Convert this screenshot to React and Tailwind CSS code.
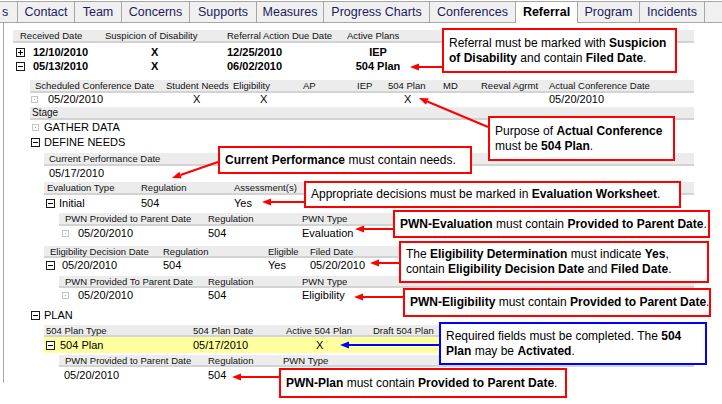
import React from 'react';

const TABS = [
  { label: 's', w: 'w-[18px]' },
  { label: 'Contact', w: 'w-[57px]' },
  { label: 'Team', w: 'w-[47px]' },
  { label: 'Concerns', w: 'w-[68px]' },
  { label: 'Supports', w: 'w-[67px]' },
  { label: 'Measures', w: 'w-[67px]' },
  { label: 'Progress Charts', w: 'w-[106px]' },
  { label: 'Conferences', w: 'w-[86px]' },
  { label: 'Referral', w: 'w-[62px]', active: true },
  { label: 'Program', w: 'w-[62px]' },
  { label: 'Incidents', w: 'w-[65px]' },
];

const CALLOUTS = [
  {
    pos: 'left-[442px] top-[28px] w-[235px] h-[45px] border-[#ff0000]',
    body: <>Referral must be marked with <b>Suspicion</b><br /><b>of Disability</b> and contain <b>Filed Date</b>.</>,
  },
  {
    pos: 'left-[488px] top-[116px] w-[187px] h-[45px] border-[#ff0000]',
    body: <>Purpose of <b>Actual Conference</b><br />must be <b>504 Plan</b>.</>,
  },
  {
    pos: 'left-[218px] top-[146px] w-[254px] h-[28px] border-[#ff0000]',
    body: <><b>Current Performance</b> must contain needs.</>,
  },
  {
    pos: 'left-[304px] top-[181px] w-[377px] h-[27px] border-[#ff0000]',
    body: <>Appropriate decisions must be marked in <b>Evaluation Worksheet</b>.</>,
  },
  {
    pos: 'left-[393px] top-[210px] w-[317px] h-[28px] border-[#ff0000]',
    body: <><b>PWN-Evaluation</b> must contain <b>Provided to Parent Date</b>.</>,
  },
  {
    pos: 'left-[399px] top-[241px] w-[310px] h-[42px] border-[#ff0000]',
    body: <>The <b>Eligibility Determination</b> must indicate <b>Yes</b>,<br />contain <b>Eligibility Decision Date</b> and <b>Filed Date</b>.</>,
  },
  {
    pos: 'left-[403px] top-[288px] w-[308px] h-[29px] border-[#ff0000]',
    body: <><b>PWN-Eligibility</b> must contain <b>Provided to Parent Date</b>.</>,
  },
  {
    pos: 'left-[439px] top-[322px] w-[268px] h-[43px] border-[#0000ff]',
    body: <>Required fields must be completed. The <b>504</b><br /><b>Plan</b> may be <b>Activated</b>.</>,
  },
  {
    pos: 'left-[279px] top-[368px] w-[288px] h-[30px] border-[#ff0000]',
    body: <><b>PWN-Plan</b> must contain <b>Provided to Parent Date</b>.</>,
  },
];

// [fromX, fromY, tipX, tipY, colour]
const ARROWS = [
  [442, 67, 410, 67, '#ff0000'],
  [488, 127, 419, 98, '#ff0000'],
  [218, 162, 172, 178, '#ff0000'],
  [304, 202, 262, 202, '#ff0000'],
  [393, 229, 355, 229, '#ff0000'],
  [399, 263, 370, 263, '#ff0000'],
  [403, 297, 354, 297, '#ff0000'],
  [439, 345, 340, 345, '#0000ff'],
  [279, 377, 232, 377, '#ff0000'],
];

function Arrow({ x1, y1, x2, y2, color }) {
  const len = Math.hypot(x2 - x1, y2 - y1);
  const ux = (x2 - x1) / len;
  const uy = (y2 - y1) / len;
  const bx = x2 - ux * 9;
  const by = y2 - uy * 9;
  const px = -uy * 3.5;
  const py = ux * 3.5;
  return (
    <g>
      <line x1={x1} y1={y1} x2={bx} y2={by} stroke={color} strokeWidth="2" />
      <polygon points={`${x2},${y2} ${bx + px},${by + py} ${bx - px},${by - py}`} fill={color} />
    </g>
  );
}

function Toggle({ minus }) {
  return (
    <svg width="9" height="9" viewBox="0 0 9 9" className="shrink-0">
      <rect x="0.5" y="0.5" width="8" height="8" fill="#fff" stroke="#1a1a1a" />
      <path d="M2 4.5h5" stroke="#000" />
      {!minus && <path d="M4.5 2v5" stroke="#000" />}
    </svg>
  );
}

function Leaf() {
  return (
    <svg width="7" height="7" viewBox="0 0 7 7" className="shrink-0">
      <rect x="0.5" y="0.5" width="6" height="6" fill="#fff" stroke="#c4c4c4" />
      <rect x="3" y="3" width="1" height="1" fill="#9a9a9a" />
    </svg>
  );
}

function Band({ className, children }) {
  return (
    <div className={`flex items-center bg-[#ececec] border-b-2 border-[#d3d3d3] text-[9.5px] leading-[11px] text-[#111] whitespace-nowrap ${className}`}>
      {children}
    </div>
  );
}

function Row({ className, children }) {
  return (
    <div className={`flex items-center text-[11px] leading-[13px] text-black whitespace-nowrap ${className}`}>
      {children}
    </div>
  );
}

export default function App() {
  return (
    <div className="relative w-[722px] h-[404px] overflow-hidden bg-white font-['Liberation_Sans',Arial,sans-serif]">
      {/* 탭 */}
      <div className="flex items-end h-[23px]">
        {TABS.map((t) => (
          <div
            key={t.label}
            className={`flex items-center h-[22px] border-t border-r border-[#a6a6a6] text-[12.5px] leading-none ${t.w} ${
              t.active ? 'bg-white font-bold text-black justify-center' : 'bg-[#f0f0f0] text-[#1b1b5e] border-b'
            } ${t.label === 's' ? 'justify-start pl-[2px] overflow-hidden' : 'justify-center'}`}
          >
            {t.label}
          </div>
        ))}
        <div className="flex-1 h-[22px] border-t border-b border-[#a6a6a6] bg-[#f0f0f0]" />
      </div>

      {/* 패널 */}
      <div className="ml-[3px] border-l border-[#a6a6a6] flex flex-col">
        <Band className="ml-[9px] w-[681px] mt-[7px] h-[13px]">
          <div className="w-[92px] pl-[7px]">Received Date</div>
          <div className="w-[122px]">Suspicion of Disability</div>
          <div className="w-[120px]">Referral Action Due Date</div>
          <div>Active Plans</div>
        </Band>
        <Row className="ml-[9px] mt-[2px] h-[14px] font-bold">
          <div className="w-[92px] flex items-center pl-[3px]"><Toggle /><span className="ml-[8px]">12/10/2010</span></div>
          <div className="w-[122px] pl-[46px]">X</div>
          <div className="w-[120px]">12/25/2010</div>
          <div className="w-[62px] text-center">IEP</div>
        </Row>
        <Row className="ml-[9px] h-[14px] font-bold">
          <div className="w-[92px] flex items-center pl-[3px]"><Toggle minus /><span className="ml-[8px]">05/13/2010</span></div>
          <div className="w-[122px] pl-[46px]">X</div>
          <div className="w-[120px]">06/02/2010</div>
          <div className="w-[62px] text-center">504 Plan</div>
        </Row>

        <Band className="ml-[26px] w-[664px] mt-[7px] h-[13px]">
          <div className="w-[136px] pl-[5px]">Scheduled Conference Date</div>
          <div className="w-[67px]">Student Needs</div>
          <div className="w-[70px]">Eligibility</div>
          <div className="w-[54px]">AP</div>
          <div className="w-[31px]">IEP</div>
          <div className="w-[55px]">504 Plan</div>
          <div className="w-[38px]">MD</div>
          <div className="w-[68px]">Reeval Agrmt</div>
          <div>Actual Conference Date</div>
        </Band>
        <Row className="ml-[26px] h-[13px]">
          <div className="w-[136px] flex items-center pl-[1px]"><Leaf /><span className="ml-[10px]">05/20/2010</span></div>
          <div className="w-[67px] pl-[27px]">X</div>
          <div className="w-[70px] pl-[27px]">X</div>
          <div className="w-[54px]" />
          <div className="w-[31px]" />
          <div className="w-[55px] pl-[16px]">X</div>
          <div className="w-[38px]" />
          <div className="w-[68px]" />
          <div>05/20/2010</div>
        </Row>

        <Band className="ml-[26px] w-[664px] mt-[1px] h-[13px] pl-[2px] text-[10px]">Stage</Band>
        <Row className="ml-[26px] h-[14px] pl-[2px] text-[10.5px]">
          <Leaf /><span className="ml-[5px]">GATHER DATA</span>
        </Row>
        <Row className="ml-[26px] h-[16px] pl-[1px] text-[10.5px]">
          <Toggle minus /><span className="ml-[4px]">DEFINE NEEDS</span>
        </Row>

        <Band className="ml-[40px] w-[650px] mt-[3px] h-[13px] pl-[5px]">Current Performance Date</Band>
        <Row className="ml-[40px] h-[15px] pl-[5px]">05/17/2010</Row>

        <Band className="ml-[40px] w-[650px] mt-[1px] h-[13px]">
          <div className="w-[97px] pl-[3px]">Evaluation Type</div>
          <div className="w-[93px]">Regulation</div>
          <div>Assessment(s)</div>
        </Band>
        <Row className="ml-[40px] h-[16px]">
          <div className="w-[97px] flex items-center pl-[2px]"><Toggle minus /><span className="ml-[4px]">Initial</span></div>
          <div className="w-[93px]">504</div>
          <div>Yes</div>
        </Row>

        <Band className="ml-[55px] w-[635px] mt-[2px] h-[13px]">
          <div className="w-[149px] pl-[6px]">PWN Provided to Parent Date</div>
          <div className="w-[94px]">Regulation</div>
          <div>PWN Type</div>
        </Band>
        <Row className="ml-[55px] h-[15px]">
          <div className="w-[149px] flex items-center pl-[3px]"><Leaf /><span className="ml-[9px]">05/20/2010</span></div>
          <div className="w-[94px]">504</div>
          <div>Evaluation</div>
        </Row>

        <Band className="ml-[40px] w-[650px] mt-[5px] h-[12px]">
          <div className="w-[119px] pl-[6px]">Eligibility Decision Date</div>
          <div className="w-[105px]">Regulation</div>
          <div className="w-[42px]">Eligible</div>
          <div>Filed Date</div>
        </Band>
        <Row className="ml-[40px] h-[15px]">
          <div className="w-[119px] flex items-center pl-[2px]"><Toggle minus /><span className="ml-[7px]">05/20/2010</span></div>
          <div className="w-[105px]">504</div>
          <div className="w-[42px]">Yes</div>
          <div>05/20/2010</div>
        </Row>

        <Band className="ml-[55px] w-[635px] mt-[3px] h-[12px]">
          <div className="w-[149px] pl-[6px]">PWN Provided To Parent Date</div>
          <div className="w-[94px]">Regulation</div>
          <div>PWN Type</div>
        </Band>
        <Row className="ml-[55px] h-[15px]">
          <div className="w-[149px] flex items-center pl-[3px]"><Leaf /><span className="ml-[9px]">05/20/2010</span></div>
          <div className="w-[94px]">504</div>
          <div>Eligibility</div>
        </Row>

        <Row className="ml-[26px] mt-[4px] h-[16px] pl-[1px] text-[10.5px]">
          <Toggle minus /><span className="ml-[4px]">PLAN</span>
        </Row>
        <Band className="ml-[40px] w-[650px] mt-[2px] h-[12px]">
          <div className="w-[149px] pl-[2px]">504 Plan Type</div>
          <div className="w-[93px]">504 Plan Date</div>
          <div className="w-[87px]">Active 504 Plan</div>
          <div>Draft 504 Plan</div>
        </Band>
        <Row className="ml-[40px] w-[650px] h-[16px] bg-[#ffffa0]">
          <div className="w-[149px] flex items-center pl-[2px]"><Toggle minus /><span className="ml-[5px]">504 Plan</span></div>
          <div className="w-[93px]">05/17/2010</div>
          <div className="w-[87px] pl-[30px]">X</div>
        </Row>
        <Band className="ml-[55px] w-[635px] mt-[2px] h-[12px]">
          <div className="w-[149px] pl-[6px]">PWN Provided to Parent Date</div>
          <div className="w-[75px]">Regulation</div>
          <div>PWN Type</div>
        </Band>
        <Row className="ml-[55px] h-[16px]">
          <div className="w-[149px] pl-[5px]">05/20/2010</div>
          <div>504</div>
        </Row>
      </div>

      {/* 화살표 */}
      <svg className="absolute left-0 top-0 pointer-events-none" width="722" height="404" viewBox="0 0 722 404">
        {ARROWS.map(([x1, y1, x2, y2, c], i) => (
          <Arrow key={i} x1={x1} y1={y1} x2={x2} y2={y2} color={c} />
        ))}
      </svg>

      {/* 설명 박스 */}
      {CALLOUTS.map((c, i) => (
        <div
          key={i}
          className={`absolute flex items-center bg-white border-2 pl-[5px] text-[12px] leading-[15px] text-black whitespace-nowrap ${c.pos}`}
        >
          <div>{c.body}</div>
        </div>
      ))}
    </div>
  );
}
